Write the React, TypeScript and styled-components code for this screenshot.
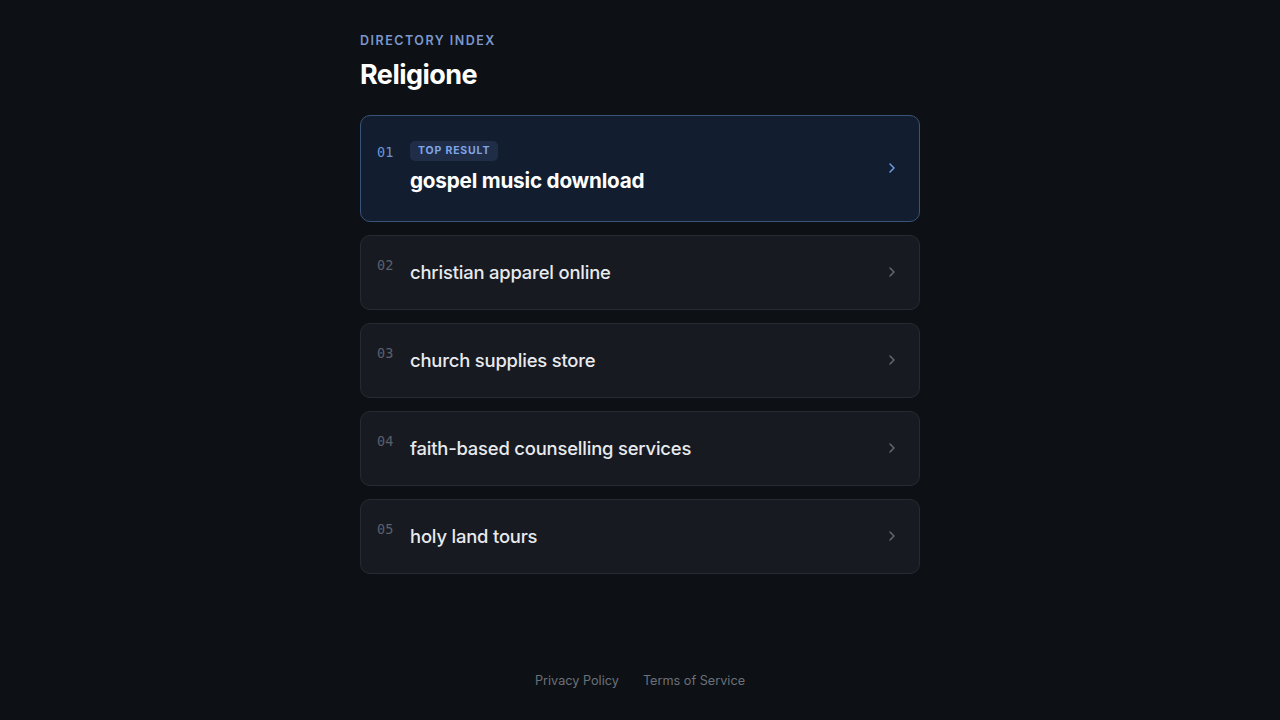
import React from "react";
import styled, { createGlobalStyle } from "styled-components";
import { ChevronRight } from "lucide-react";

const Global = createGlobalStyle`
  html, body { margin: 0; padding: 0; background: #0d1014; }
  body { font-family: Inter, "Noto Sans", sans-serif; color: #e6e8eb; }
  * { box-sizing: border-box; }
`;

const Page = styled.div`
  min-height: 100vh;
  display: flex;
  flex-direction: column;
  align-items: center;
`;

const Main = styled.main`
  flex: 1;
  width: 560px;
  padding-top: 33px;
`;

const Eyebrow = styled.div`
  font-size: 12.5px;
  font-weight: 600;
  letter-spacing: 0.12em;
  color: #7b98cf;
  line-height: 16px;
`;

const Title = styled.h1`
  margin: 9px 0 23px;
  font-size: 27px;
  font-weight: 700;
  letter-spacing: -0.02em;
  line-height: 34px;
  color: #ffffff;
`;

const List = styled.div`
  display: flex;
  flex-direction: column;
  gap: 13px;
`;

const Card = styled.a<{ $active?: boolean }>`
  display: flex;
  align-items: center;
  gap: 8px;
  padding: ${(p) => (p.$active ? "25px 19px 26px 16px" : "22px 19px 23px 16px")};
  border-radius: 10px;
  border: 1px solid ${(p) => (p.$active ? "#3a5378" : "#262a33")};
  background: ${(p) => (p.$active ? "#121e2f" : "#171a21")};
  color: ${(p) => (p.$active ? "#6f9be0" : "#626873")};
  text-decoration: none;
  cursor: pointer;
`;

const Num = styled.span<{ $active?: boolean }>`
  align-self: flex-start;
  width: 25px;
  flex-shrink: 0;
  font-family: "DejaVu Sans Mono", "Liberation Mono", monospace;
  font-size: 13.5px;
  line-height: 16px;
  margin-top: ${(p) => (p.$active ? "3px" : "-1px")};
  color: ${(p) => (p.$active ? "#6f93d0" : "#5b606b")};
`;

const Body = styled.div`
  flex: 1;
  display: flex;
  flex-direction: column;
  align-items: flex-start;
  gap: 6px;
`;

const Badge = styled.span`
  display: inline-block;
  padding: 3px 8px;
  border-radius: 5px;
  background: #1f2d46;
  color: #7fa5e6;
  font-size: 10.5px;
  font-weight: 700;
  letter-spacing: 0.08em;
  line-height: 14px;
`;

const ItemTitle = styled.span<{ $active?: boolean }>`
  font-size: ${(p) => (p.$active ? "20.7px" : "18.4px")};
  font-weight: ${(p) => (p.$active ? 700 : 500)};
  letter-spacing: -0.01em;
  line-height: 28px;
  color: ${(p) => (p.$active ? "#ffffff" : "#e8eaee")};
`;

const Footer = styled.footer`
  display: flex;
  gap: 24px;
  padding: 24px 0 29px;
`;

const FooterLink = styled.a`
  font-size: 12.7px;
  line-height: 20px;
  color: #6b7079;
  text-decoration: none;
`;

const items = [
  "gospel music download",
  "christian apparel online",
  "church supplies store",
  "faith-based counselling services",
  "holy land tours",
];

export default function App() {
  return (
    <Page>
      <Global />
      <Main>
        <Eyebrow>DIRECTORY INDEX</Eyebrow>
        <Title>Religione</Title>
        <List>
          {items.map((t, i) => {
            const active = i === 0;
            return (
              <Card key={t} $active={active}>
                <Num $active={active}>{String(i + 1).padStart(2, "0")}</Num>
                <Body>
                  {active && <Badge>TOP RESULT</Badge>}
                  <ItemTitle $active={active}>{t}</ItemTitle>
                </Body>
                <ChevronRight size={16} strokeWidth={2.25} />
              </Card>
            );
          })}
        </List>
      </Main>
      <Footer>
        <FooterLink href="#">Privacy Policy</FooterLink>
        <FooterLink href="#">Terms of Service</FooterLink>
      </Footer>
    </Page>
  );
}
